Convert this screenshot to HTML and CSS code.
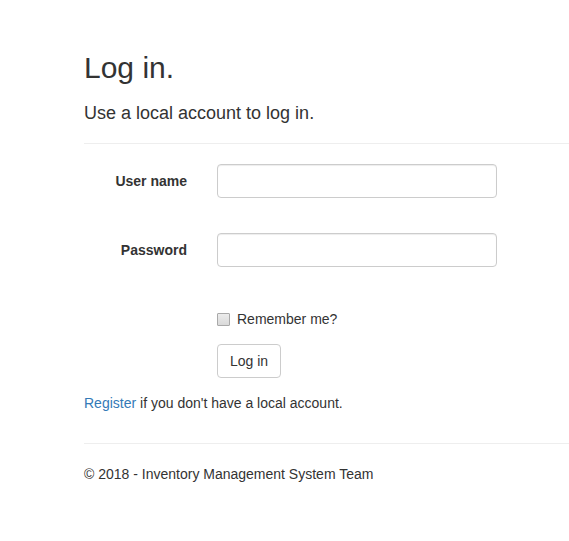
FILE: index.html
```html
<!DOCTYPE html>
<html>
<head>
<meta charset="utf-8">
<title>Log in</title>
<link rel="stylesheet" href="styles.css">
</head>
<body>
<div class="page">
  <h2 class="title">Log in.</h2>
  <section class="login">
    <h4 class="subtitle">Use a local account to log in.</h4>
    <hr class="rule">
    <form class="form">
      <div class="group">
        <label class="label" for="user">User name</label>
        <div class="field">
          <input class="input" id="user" type="text">
          <span class="validation"></span>
        </div>
      </div>
      <div class="group">
        <label class="label" for="pass">Password</label>
        <div class="field">
          <input class="input" id="pass" type="password">
          <span class="validation"></span>
        </div>
      </div>
      <div class="group">
        <div class="spacer"></div>
        <div class="field">
          <div class="checkbox">
            <label class="check-label"><input class="check" type="checkbox">Remember me?</label>
          </div>
        </div>
      </div>
      <div class="group">
        <div class="spacer"></div>
        <div class="field">
          <button class="btn" type="button">Log in</button>
        </div>
      </div>
      <p class="text"><a class="link" href="#">Register</a> if you don't have a local account.</p>
    </form>
  </section>
  <hr class="rule footer-rule">
  <footer>
    <p class="text">&copy; 2018 - Inventory Management System Team</p>
  </footer>
</div>
</body>
</html>
```

FILE: styles.css
```css
html, body {
  margin: 0;
  padding: 0;
  background: #fff;
}
body {
  font-family: "Liberation Sans", Arial, Helvetica, sans-serif;
  font-size: 14px;
  line-height: 20px;
  color: #333;
  overflow: hidden;
}
.page {
  padding: 51px 0 0 84px;
}
.title {
  margin: 0;
  font-size: 30px;
  line-height: 33px;
  font-weight: normal;
}
.login {
  display: flow-root;
}
.subtitle {
  margin: 19px 0 0 0;
  font-size: 18px;
  line-height: 20px;
  font-weight: normal;
}
.rule {
  margin: 20px 0;
  border: 0;
  border-top: 1px solid #eee;
  height: 0;
}
.form {
  margin: 0;
}
.group {
  display: flex;
  gap: 30px;
  margin-bottom: 15px;
}
.label {
  width: 103px;
  flex: none;
  text-align: right;
  font-weight: bold;
  padding-top: 7px;
  line-height: 20px;
}
.spacer {
  width: 103px;
  flex: none;
}
.field {
  flex: 1;
}
.input {
  display: block;
  box-sizing: border-box;
  width: 280px;
  height: 34px;
  padding: 6px 12px;
  margin: 0;
  font-family: inherit;
  font-size: 14px;
  color: #555;
  background: #fff;
  border: 1px solid #ccc;
  border-radius: 4px;
  box-shadow: inset 0 1px 1px rgba(0, 0, 0, 0.075);
  outline: none;
}
.validation {
  display: block;
  height: 20px;
}
.checkbox {
  padding-top: 7px;
  min-height: 20px;
}
.check-label {
  display: block;
  padding-left: 20px;
  line-height: 20px;
  font-weight: normal;
}
.check {
  appearance: none;
  -webkit-appearance: none;
  box-sizing: border-box;
  width: 13px;
  height: 13px;
  margin: 4px 0 0 -20px;
  float: left;
  border: 1px solid #a9a9a9;
  border-radius: 1px;
  background: linear-gradient(#ececec, #d9d9d9);
}
.btn {
  box-sizing: border-box;
  height: 34px;
  padding: 6px 12px;
  font-family: inherit;
  font-size: 14px;
  line-height: 20px;
  color: #333;
  background: #fff;
  border: 1px solid #ccc;
  border-radius: 4px;
  margin: 0;
}
.text {
  margin: 0 0 10px 0;
}
.link {
  color: #337ab7;
  text-decoration: none;
}
footer .text {
  margin: 0;
}
```
